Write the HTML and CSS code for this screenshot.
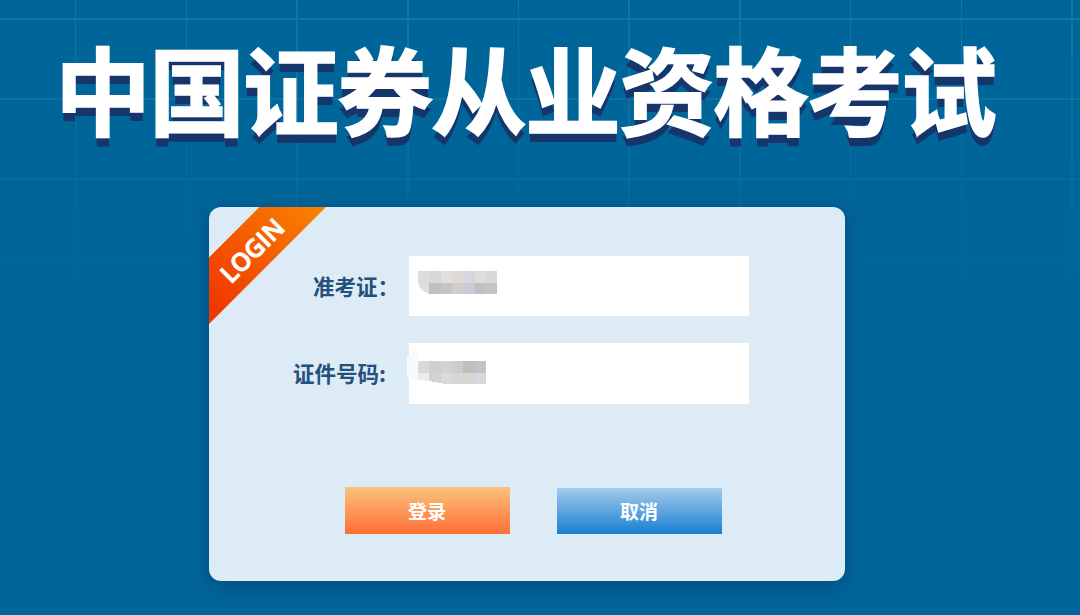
FILE: index.html
```html
<!DOCTYPE html>
<html lang="zh-CN">
<head>
<meta charset="utf-8">
<title>中国证券从业资格考试</title>
<link rel="stylesheet" href="styles.css">
</head>
<body>
<main class="page">
  <h1 class="title">中国证券从业资格考试</h1>
  <form class="card">
    <svg class="ribbon" width="117" height="117" viewBox="0 0 117 117">
      <defs>
        <linearGradient id="flame" x1="0" y1="1" x2="1" y2="0">
          <stop offset="0.1" stop-color="#f03800"/>
          <stop offset="0.95" stop-color="#f98000"/>
        </linearGradient>
      </defs>
      <path d="M0 50.500 50.500 0H117L0 117Z" fill="url(#flame)"/>
      <text class="ribbon-text" transform="translate(22 77.500) rotate(-45)" textLength="78" lengthAdjust="spacingAndGlyphs">LOGIN</text>
    </svg>
    <div class="row">
      <label class="label label-ticket">准考证：</label>
      <div class="field">
        <svg class="mosaic" width="79" height="23" viewBox="0 0 79 23" shape-rendering="crispEdges">
          <rect width="11.500" height="12" fill="#dddbdc"/><rect x="11.300" width="11.500" height="12" fill="#d7d7d8"/><rect x="22.600" width="11.500" height="12" fill="#dfdfde"/><rect x="33.900" width="11.500" height="12" fill="#dcd9d6"/><rect x="45.200" width="11.500" height="12" fill="#d5d7db"/><rect x="56.500" width="11.500" height="12" fill="#dddddb"/><rect x="67.800" width="11.500" height="12" fill="#d5d7d8"/>
          <path d="M0 12H11.500V23Q2 20 0 12" fill="#e0dde3"/><rect x="11.300" y="12" width="11.500" height="11" fill="#c2c0be"/><rect x="22.600" y="12" width="11.500" height="11" fill="#c5c5c6"/><rect x="33.900" y="12" width="11.500" height="11" fill="#d1cec6"/><rect x="45.200" y="12" width="11.500" height="11" fill="#c7ccd8"/><rect x="56.500" y="12" width="11.500" height="11" fill="#c1c0bf"/><rect x="67.800" y="12" width="11.500" height="11" fill="#c3c4c8"/>
        </svg>
      </div>
    </div>
    <div class="row">
      <label class="label">证件号码:</label>
      <div class="field field-id">
        <svg class="smudge" width="11" height="30" viewBox="0 0 11 30"><path d="M0 6Q3 1 11 0V30Q3 29 0 26Z" fill="#f8fbfb"/></svg>
        <svg class="mosaic" width="68" height="23" viewBox="0 0 68 23" shape-rendering="crispEdges">
          <rect width="11.500" height="12" fill="#d7d9da"/><rect x="11.300" width="11.500" height="12" fill="#cecfd0"/><rect x="22.600" width="11.500" height="12" fill="#d1d2d3"/><rect x="33.900" width="11.500" height="12" fill="#cdcccc"/><rect x="45.200" width="11.500" height="12" fill="#c0bfbb"/><rect x="56.500" width="11.500" height="12" fill="#c2c3c8"/>
          <path d="M0 12H11.500V20L0 19" fill="#ebeded"/><path d="M11.300 12H22.800V22L11.300 20" fill="#d3d2d0"/><path d="M22.600 12H34V23H28L22.600 22" fill="#d9dbda"/><rect x="33.900" y="12" width="22.800" height="11" fill="#d7d6d5"/><rect x="56.500" y="12" width="11.500" height="11" fill="#d5d9dc"/>
        </svg>
      </div>
    </div>
    <div class="actions">
      <button class="btn btn-login" type="button">登录</button>
      <button class="btn btn-cancel" type="button">取消</button>
    </div>
  </form>
</main>
</body>
</html>
```
FILE: styles.css
```css
* {
  box-sizing: border-box;
}

body {
  margin: 0;
  font-family: "Liberation Sans", "Noto Sans CJK SC", sans-serif;
}

.page {
  height: 615px;
  overflow: hidden;
  background:
    linear-gradient(to bottom, transparent 0, #006699 280px),
    repeating-linear-gradient(to right, transparent 0 75px, #1676a1 75px 76.500px, transparent 76.500px 110.700px),
    repeating-linear-gradient(to bottom, transparent 0 18px, #1676a1 18px 20px, transparent 20px 80px),
    #006699;
}

.title {
  margin: 0 0 0 55px;
  padding-top: 37px;
  height: 207px;
  font-family: "Noto Sans CJK SC", sans-serif;
  font-size: 96px;
  font-weight: 700;
  line-height: 100px;
  letter-spacing: -2px;
  white-space: nowrap;
  color: #fff;
  -webkit-text-stroke: 1.500px #fff;
  text-shadow: 0 9px 0 #16356b;
}

.card {
  position: relative;
  width: 636px;
  height: 374px;
  margin-left: 209px;
  padding-top: 48px;
  border-radius: 12px;
  background: #ddebf6;
  box-shadow: 0 5px 20px rgba(8, 48, 110, 0.5);
  overflow: hidden;
}

.ribbon {
  position: absolute;
  left: 0;
  top: 0;
}

.ribbon-text {
  font: 600 25px "Open Sans", sans-serif;
  fill: #fff;
  stroke: #fff;
  stroke-width: 0.900px;
}

.row {
  display: flex;
  align-items: flex-start;
  height: 62px;
  margin-bottom: 25px;
}

.label {
  width: 177px;
  margin-right: 22px;
  font: bold 21.500px/61px "Noto Sans CJK SC", sans-serif;
  text-align: right;
  white-space: nowrap;
  color: #24507b;
}

.label-ticket {
  width: 190px;
  margin-right: 9px;
}

.field {
  position: relative;
  width: 342px;
  height: 62px;
  padding: 15px 9px;
  border: 1px solid #e8e9eb;
  background: #fff;
}

.field-id {
  height: 63px;
  padding-top: 18px;
}

.smudge {
  position: absolute;
  left: -2px;
  top: 8px;
}

.mosaic {
  display: block;
}

.actions {
  display: flex;
  align-items: flex-end;
  gap: 47px;
  height: 47px;
  margin: 83px 0 0 135.500px;
}

.btn {
  width: 165px;
  padding: 0 0 1px;
  border: 0;
  font: bold 19px "Noto Sans CJK SC", sans-serif;
  color: #fff;
}

.btn-login {
  height: 47px;
  background: linear-gradient(#fcc37c, #fe6f36);
}

.btn-cancel {
  height: 46px;
  background: linear-gradient(#a4cbec, #187fd0);
}
```
